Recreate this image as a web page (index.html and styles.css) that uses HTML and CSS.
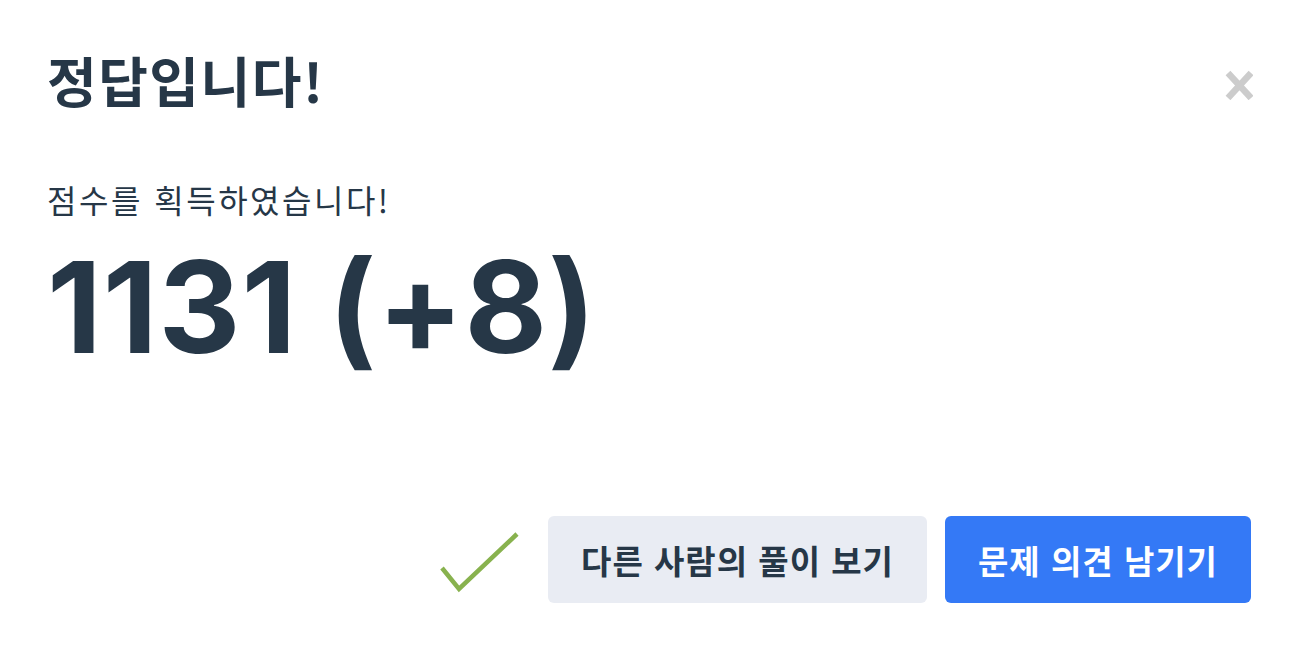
FILE: index.html
```html
<!DOCTYPE html>
<html lang="ko">
<head>
    <meta charset="UTF-8">
    <meta name="viewport" content="width=device-width, initial-scale=1.0">
    <title>정답입니다!</title>
    <link rel="stylesheet" href="styles.css">
</head>
<body>
    <div class="modal">
        <div class="modal-header">
            <h1 class="modal-title">정답입니다!</h1>
            <button class="modal-close" type="button" aria-label="닫기">
                <svg width="28" height="30" viewBox="0 0 28 30">
                    <path d="M3 3 L26 28 M26 3 L3 28" stroke="#cccccc" stroke-width="6.5" fill="none"/>
                </svg>
            </button>
        </div>

        <p class="score-label">점수를 획득하였습니다!</p>
        <div class="score">1131 (+8)</div>

        <div class="modal-footer">
            <svg class="check" width="80" height="62" viewBox="0 0 80 62">
                <path d="M3 37 L20 58 L78 3" stroke="#88b24e" stroke-width="4.5" fill="none"/>
            </svg>
            <button class="btn btn-light" type="button">다른 사람의 풀이 보기</button>
            <button class="btn btn-primary" type="button">문제 의견 남기기</button>
        </div>
    </div>
</body>
</html>
```

FILE: styles.css
```css
body {
    margin: 0;
    padding: 0;
    background-color: #fff;
    font-family: "Inter", "Noto Sans CJK KR", sans-serif;
    color: #263747;
}

.modal {
    box-sizing: border-box;
    height: 662px;
    padding: 46px 61px 59px 47px;
    display: flex;
    flex-direction: column;
}

.modal-header {
    display: flex;
    justify-content: space-between;
    align-items: center;
}

.modal-title {
    margin: 0;
    font-family: "Noto Sans CJK KR", sans-serif;
    font-size: 54px;
    font-weight: 700;
    line-height: 68px;
    letter-spacing: 1.5px;
}

.modal-close {
    background: none;
    border: none;
    padding: 0;
    margin: 9px 0 0 0;
    cursor: pointer;
    display: flex;
}

.score-label {
    margin: 63px 0 0;
    font-family: "Noto Sans CJK KR", sans-serif;
    font-size: 32px;
    line-height: 45px;
    letter-spacing: 2.5px;
}

.score {
    margin-top: 22px;
    font-size: 127px;
    font-weight: 700;
    line-height: 1;
    letter-spacing: 1px;
}

.modal-footer {
    margin-top: auto;
    margin-right: 2px;
    display: flex;
    justify-content: flex-end;
    align-items: center;
    gap: 18px;
}

.check {
    margin-right: 11px;
    margin-top: 4px;
}

.btn {
    height: 87px;
    padding: 0 33px;
    border: none;
    border-radius: 6px;
    font-family: "Noto Sans CJK KR", sans-serif;
    font-size: 33px;
    font-weight: 700;
    letter-spacing: 1px;
    cursor: pointer;
}

.btn-light {
    background-color: #e9ecf3;
    color: #263747;
}

.btn-primary {
    background-color: #3479f6;
    color: #fff;
}
```
